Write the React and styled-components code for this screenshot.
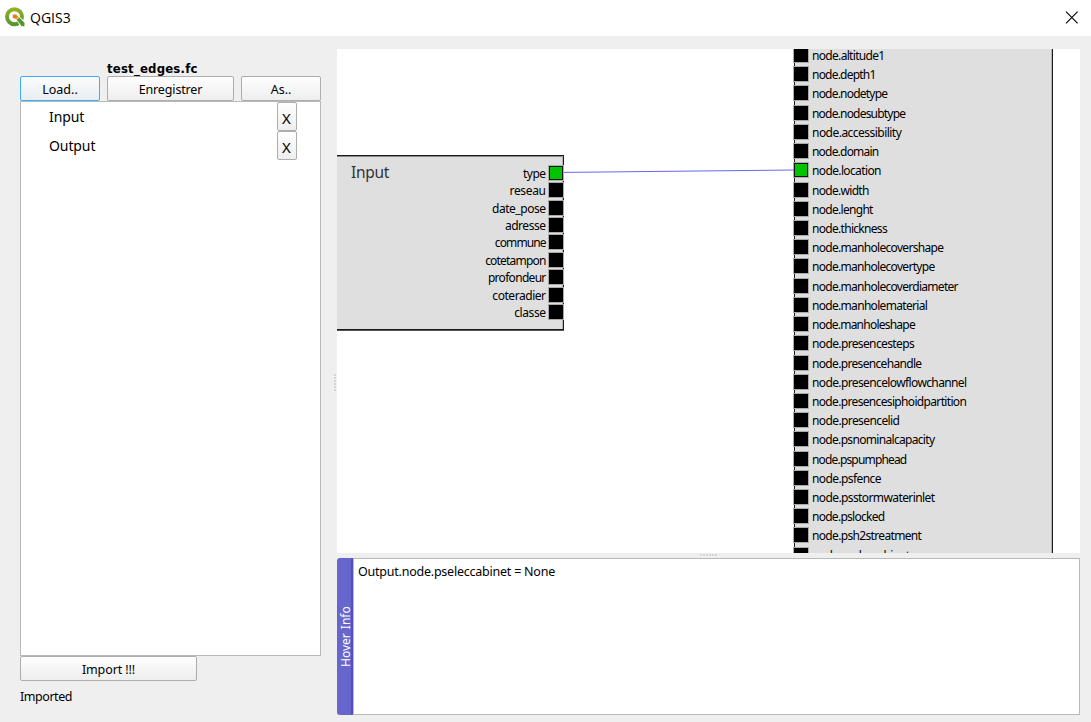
import React from "react";
import styled, { createGlobalStyle } from "styled-components";

const Global = createGlobalStyle`
  * { box-sizing: border-box; }
  html, body { margin: 0; padding: 0; }
  body { font-family: "Noto Sans", "DejaVu Sans", sans-serif; font-size: 12px; color: #000; background: #efefef; overflow: hidden; }
`;

const Window = styled.div`
  width: 1091px;
  height: 722px;
  display: flex;
  flex-direction: column;
  background: #efefef;
`;

const TitleBar = styled.header`
  height: 36px;
  flex: none;
  display: flex;
  align-items: center;
  padding: 0 13px 2px 5px;
  background: #fff;
`;

const WindowTitle = styled.h1`
  margin: 1px auto 0 5px;
  font: 400 14px/20px "Open Sans", sans-serif;
  letter-spacing: 0;
`;

const Body = styled.div`
  flex: 1;
  min-height: 0;
  display: flex;
`;

const Sidebar = styled.aside`
  width: 321px;
  padding: 24px 0 0 20px;
  display: flex;
  flex-direction: column;
`;

const FileName = styled.div`
  height: 16px;
  padding-left: 87px;
  font-family: "DejaVu Sans Condensed", "DejaVu Sans", sans-serif;
  font-stretch: condensed;
  font-weight: 700;
  font-size: 13px;
  letter-spacing: 0.2px;
  line-height: 17px;
`;

const Toolbar = styled.div`
  display: flex;
  gap: 7px;
  height: 25px;
`;

const Button = styled.button`
  width: ${(p) => p.$width}px;
  height: ${(p) => p.$height || 25}px;
  flex: none;
  padding: ${(p) => p.$pad || "2px 0 0"};
  border: 1px solid ${(p) => (p.$focused ? "#3daefd" : "#adadad")};
  border-radius: 2px;
  background: ${(p) => (p.$focused ? "linear-gradient(#fbfcfd, #e8edf2)" : "linear-gradient(#fefefe, #eeeeee)")};
  font: 400 ${(p) => p.$size || 12.5}px/16px "Noto Sans", sans-serif;
  letter-spacing: ${(p) => p.$spacing || 0}px;
  color: #000;
`;

const NodeList = styled.ul`
  height: 555px;
  margin: 0;
  padding: 0 23px 0 28px;
  list-style: none;
  background: #fff;
  border: 1px solid #b9b9b9;
`;

const NodeItem = styled.li`
  height: 29px;
  display: flex;
  justify-content: space-between;
  font-size: 14px;
  letter-spacing: -0.1px;
  line-height: 29px;
`;

const Status = styled.div`
  margin-top: 7px;
  font-size: 12.5px;
  line-height: 17px;
  letter-spacing: -0.45px;
`;

const VerticalGrip = styled.div`
  width: 16px;
  display: flex;
  align-items: center;
  justify-content: flex-end;
  padding: 7px 0 0;
`;

const HorizontalGrip = styled.div`
  height: 5px;
  display: flex;
  justify-content: center;
  align-items: center;
`;

const GripDots = styled.span`
  width: ${(p) => (p.$vertical ? 3 : 17)}px;
  height: ${(p) => (p.$vertical ? 17 : 3)}px;
  background: radial-gradient(circle at 1px 1px, #b8b8b8 0.6px, transparent 0.8px) 0 0 / 3px 3px;
`;

const Workspace = styled.main`
  width: 743px;
  padding-top: 13px;
  display: flex;
  flex-direction: column;
`;

const Canvas = styled.section`
  position: relative;
  height: 504px;
  overflow: hidden;
  background: #fff;
`;

const Link = styled.svg`
  position: absolute;
  left: 227px;
  top: 116px;
`;

const GraphNode = styled.div`
  position: absolute;
  left: ${(p) => p.$left}px;
  top: ${(p) => p.$top}px;
  width: ${(p) => p.$width}px;
  height: ${(p) => p.$height}px;
  padding-top: ${(p) => p.$padTop}px;
  background: #dfdfdf;
  border: 1px solid #1a1a1a;
  box-shadow: inset -1px 0 #b4b4b4, inset 0 1px #8a8a8a, 0 1px #555;
`;

const NodeTitle = styled.h2`
  position: absolute;
  left: 93px;
  top: 5px;
  margin: 0;
  font-weight: 400;
  font-size: 15.5px;
  letter-spacing: -0.3px;
  line-height: 22px;
  color: #333;
`;

const Port = styled.div`
  height: ${(p) => p.$pitch}px;
  display: flex;
  flex-direction: ${(p) => (p.$output ? "row-reverse" : "row")};
  align-items: center;
  gap: ${(p) => (p.$output ? 3.4 : 4)}px;
  margin-left: ${(p) => (p.$output ? 0 : -1)}px;
`;

const Socket = styled.span`
  width: 14px;
  height: 14px;
  flex: none;
  background: ${(p) => (p.$linked ? "#00c400" : "#000")};
  border: 1px solid ${(p) => (p.$linked ? "#111" : "#000")};
  box-shadow: 0 0 0 1px ${(p) => (p.$linked ? "#a9b3a9" : "#aaa")};
`;

const PortLabel = styled.span`
  font-size: 12px;
  line-height: 16px;
  white-space: nowrap;
  letter-spacing: ${(p) => p.$spacing}px;
  padding-top: 2px;
`;

const InfoPanel = styled.section`
  height: 157px;
  display: flex;
`;

const InfoTab = styled.div`
  width: 16px;
  background: #6666cc;
  border-left: 2px solid #5252b8;
  border-radius: 0 3px 3px 0;
  color: #fff;
  writing-mode: vertical-rl;
  transform: rotate(180deg);
  text-align: center;
  font-size: 12px;
  line-height: 18px;
  word-spacing: 1px;
`;

const InfoText = styled.div`
  flex: 1;
  padding: 4px;
  background: #fff;
  border: 1px solid #b9b9b9;
  font-size: 12.5px;
  line-height: 17px;
  letter-spacing: -0.23px;
`;

const inputs = [
  ["type", -0.5], ["reseau", -0.35], ["date_pose", -0.45], ["adresse", -0.45], ["commune", -0.9],
  ["cotetampon", -0.8], ["profondeur", -0.7], ["coteradier", -0.45], ["classe", -0.4],
];

const outputs = [
  ["altitude1", -0.68], ["depth1", -0.79], ["nodetype", -0.79], ["nodesubtype", -0.8], ["accessibility", -0.53],
  ["domain", -0.8], ["location", -0.63], ["width", -0.7], ["lenght", -0.7], ["thickness", -0.7],
  ["manholecovershape", -0.7], ["manholecovertype", -0.7], ["manholecoverdiameter", -0.71],
  ["manholematerial", -0.69], ["manholeshape", -0.77], ["presencesteps", -0.63], ["presencehandle", -0.67],
  ["presencelowflowchannel", -0.62], ["presencesiphoidpartition", -0.66], ["presencelid", -0.6],
  ["psnominalcapacity", -0.68], ["pspumphead", -0.83], ["psfence", -0.6], ["psstormwaterinlet", -0.6],
  ["pslocked", -0.73], ["psh2streatment", -0.66], ["pseleccabinet", -0.65],
];

function Logo() {
  return (
    <svg width="20" height="20" viewBox="0 0 20 20">
      <defs>
        <linearGradient id="ring" x1="0" y1="0" x2="0" y2="1">
          <stop offset="0" stopColor="#93b023" />
          <stop offset="1" stopColor="#589632" />
        </linearGradient>
      </defs>
      <circle cx="9.5" cy="9.7" r="7.5" fill="none" stroke="url(#ring)" strokeWidth="3.9" />
      <path d="M10.5 11.5l2-1.5h2.5l5 5v4.8h-4.5z" fill="#fff" />
      <path d="M11.4 12.2l2.6-1.9 5.5 5.5v3.5h-2.9z" fill="#589632" />
      <path d="M7.8 7.6h3.4l2.2 2.4-1.6 2-4-1z" fill="#ee7913" />
      <path d="M10.8 11.4l1.9-1.6 1.5 1-1.9 1.9z" fill="#f5b04a" />
    </svg>
  );
}

export default function App() {
  return (
    <Window>
      <Global />
      <TitleBar>
        <Logo />
        <WindowTitle>QGIS3</WindowTitle>
        <svg width="13" height="13" viewBox="0 0 13 13">
          <path d="M1 .7l11.6 11.6M12.6.7L1 12.3" stroke="#000" strokeWidth="1.1" />
        </svg>
      </TitleBar>
      <Body>
        <Sidebar>
          <FileName>test_edges.fc</FileName>
          <Toolbar>
            <Button $width={80} $focused>Load..</Button>
            <Button $width={127} $spacing={-0.15}>Enregistrer</Button>
            <Button $width={80}>As..</Button>
          </Toolbar>
          <NodeList>
            {["Input", "Output"].map((name) => (
              <NodeItem key={name}>
                {name}
                <Button $width={20} $height={29} $size={15} $pad="2px 1px 0 0">X</Button>
              </NodeItem>
            ))}
          </NodeList>
          <Button $width={177} $spacing={-0.1}>Import !!!</Button>
          <Status>Imported</Status>
        </Sidebar>
        <VerticalGrip><GripDots $vertical /></VerticalGrip>
        <Workspace>
          <Canvas>
            <GraphNode $left={-80} $top={106} $width={307} $height={175} $padTop={8}>
              <NodeTitle>Input</NodeTitle>
              {inputs.map(([name, spacing], i) => (
                <Port key={name} $pitch={17.44} $output>
                  <Socket $linked={i === 0} />
                  <PortLabel $spacing={spacing}>{name}</PortLabel>
                </Port>
              ))}
            </GraphNode>
            <GraphNode $left={457} $top={-30} $width={259} $height={620} $padTop={25.4}>
              {outputs.map(([name, spacing]) => (
                <Port key={name} $pitch={19.22}>
                  <Socket $linked={name === "location"} />
                  <PortLabel $spacing={spacing}>node.{name}</PortLabel>
                </Port>
              ))}
            </GraphNode>
            <Link width="230" height="12">
              <path d="M0 7.4L230 5" fill="none" stroke="#6666f0" />
            </Link>
          </Canvas>
          <HorizontalGrip><GripDots /></HorizontalGrip>
          <InfoPanel>
            <InfoTab>Hover Info</InfoTab>
            <InfoText>Output.node.pseleccabinet = None</InfoText>
          </InfoPanel>
        </Workspace>
      </Body>
    </Window>
  );
}
